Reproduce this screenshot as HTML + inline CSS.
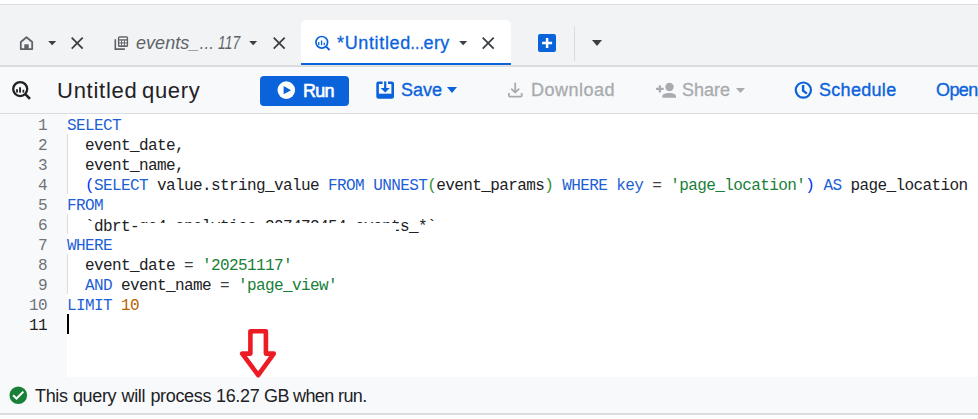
<!DOCTYPE html>
<html><head><meta charset="utf-8">
<style>
*{margin:0;padding:0;box-sizing:border-box}
html,body{width:978px;height:419px;overflow:hidden;background:#fff;position:relative;font-family:"Liberation Sans",sans-serif}
.a{position:absolute}
.t{position:absolute;white-space:nowrap;line-height:1}
#tabbar{left:0;top:4px;width:978px;height:63px;background:#f1f3f4;border-top:1px solid #dadce0;border-bottom:2px solid #dadce0}
#acttab{left:301px;top:20px;width:210px;height:45px;background:#fff;border-radius:5px 5px 0 0}
#actline{left:301px;top:63px;width:210px;height:2px;background:#0b63dc}
#toolbar{left:0;top:67px;width:978px;height:47px;background:#f8f9fa;border-bottom:1px solid #dadce0}
#gutter{left:0;top:114px;width:67px;height:263px;background:#f8f9fa}
#status{left:0;top:377px;width:978px;height:38px;background:#f8f9fa;border-bottom:2px solid #dadce0}
.code{position:absolute;left:67px;font-family:"Liberation Mono",monospace;font-size:16px;letter-spacing:-0.6px;white-space:pre;color:#202124;height:20px;line-height:25px}
.ln{position:absolute;left:0;width:47px;text-align:right;font-family:"Liberation Mono",monospace;font-size:16px;letter-spacing:-0.6px;color:#6f7378;height:20px;line-height:25px}
.kw{color:#1d5fd6}
.str{color:#188038}
.num{color:#b85f00}
.p1{color:#0431fa}
.p2{color:#319331}
.op{color:#3c4043}
.guide{position:absolute;left:67px;width:1px;background:#dadce0}
.btxt{color:#0b63dc;font-size:18px;-webkit-text-stroke:0.35px #0b63dc}
.gtxt{color:#a8abaf;font-size:18px;-webkit-text-stroke:0.3px #a8abaf}
</style></head><body>
<div id="tabbar" class="a"></div>
<div id="acttab" class="a"></div>
<div id="actline" class="a"></div>
<div class="a" style="left:301px;top:65px;width:210px;height:1px;background:#e4e3e0"></div>

<!-- tab 1: home -->
<svg class="a" style="left:19px;top:36px" width="15" height="15" viewBox="0 0 15 15">
<path d="M7.5 1.3 L1.8 6 V13.1 H13.2 V6 Z" fill="none" stroke="#5f6368" stroke-width="1.8" stroke-linejoin="round"/>
<rect x="5.3" y="8.3" width="4.4" height="5.2" fill="#5f6368"/>
</svg>
<svg class="a" style="left:48px;top:41px" width="9" height="5" viewBox="0 0 9 5"><path d="M0.2 0H8.2L4.2 4.2Z" fill="#3c4043"/></svg>
<svg class="a" style="left:70px;top:36px" width="14" height="14" viewBox="0 0 14 14"><path d="M1.7 1.6L12.7 12.6M12.7 1.6L1.7 12.6" stroke="#3c4043" stroke-width="1.8"/></svg>

<!-- tab 2 -->
<svg class="a" style="left:108px;top:30px" width="26" height="26" viewBox="108 30 26 26">
<path d="M115.3 39.3 V49.1 H124.9" fill="none" stroke="#5f6368" stroke-width="1.6"/>
<rect x="117.9" y="36.2" width="10.2" height="10.8" rx="1.6" fill="#5f6368"/>
<rect x="119.3" y="37.7" width="7.4" height="1.5" fill="#fff"/>
<rect x="119.3" y="40.6" width="1.8" height="1.8" fill="#fff"/><rect x="122.1" y="40.6" width="1.8" height="1.8" fill="#fff"/><rect x="124.9" y="40.6" width="1.8" height="1.8" fill="#fff"/>
<rect x="119.3" y="43.5" width="1.8" height="1.8" fill="#fff"/><rect x="122.1" y="43.5" width="1.8" height="1.8" fill="#fff"/><rect x="124.9" y="43.5" width="1.8" height="1.8" fill="#fff"/>
</svg>
<div class="t" style="left:136px;top:34px;font-size:18px;font-style:italic;letter-spacing:0.05px;color:#5f6368">events_</div>
<div class="t" style="left:199px;top:34px;font-size:18px;font-style:italic;color:#5f6368;transform:scaleX(0.85);transform-origin:0 0">…</div>
<div class="t" style="left:218px;top:34px;font-size:18px;font-style:italic;color:#5f6368;transform:scaleX(0.77);transform-origin:0 0">117</div>
<svg class="a" style="left:249px;top:41px" width="9" height="5" viewBox="0 0 9 5"><path d="M0.2 0H8.2L4.2 4.2Z" fill="#3c4043"/></svg>
<svg class="a" style="left:272px;top:36px" width="14" height="14" viewBox="0 0 14 14"><path d="M1.7 1.6L12.7 12.6M12.7 1.6L1.7 12.6" stroke="#3c4043" stroke-width="1.8"/></svg>

<!-- tab 3 -->
<svg class="a" style="left:310px;top:30px" width="26" height="26" viewBox="310 30 26 26">
<circle cx="321.8" cy="42.3" r="5.8" fill="none" stroke="#0b63dc" stroke-width="1.7"/>
<path d="M325.9 46.4 L329.6 50.1" stroke="#0b63dc" stroke-width="2"/>
<rect x="318.1" y="42" width="1.3" height="3.2" fill="#0b63dc"/><rect x="320.9" y="40.5" width="1.3" height="4.7" fill="#0b63dc"/><rect x="323.6" y="42.6" width="1.3" height="2.6" fill="#0b63dc"/>
</svg>
<div class="t" style="left:337px;top:34px;font-size:18px;letter-spacing:0.65px;color:#0b63dc;-webkit-text-stroke:0.3px #0b63dc">*Untitled</div>
<div class="t" style="left:410px;top:34px;font-size:18px;color:#0b63dc;-webkit-text-stroke:0.3px #0b63dc;transform:scaleX(0.8);transform-origin:0 0">…</div>
<div class="t" style="left:423.5px;top:34px;font-size:18px;letter-spacing:0.4px;color:#0b63dc;-webkit-text-stroke:0.3px #0b63dc">ery</div>
<svg class="a" style="left:459px;top:41px" width="9" height="5" viewBox="0 0 9 5"><path d="M0.2 0H8.2L4.2 4.2Z" fill="#3c4043"/></svg>
<svg class="a" style="left:481px;top:36px" width="14" height="14" viewBox="0 0 14 14"><path d="M1.7 1.6L12.7 12.6M12.7 1.6L1.7 12.6" stroke="#3c4043" stroke-width="1.8"/></svg>

<!-- new tab -->
<div class="a" style="left:538px;top:34px;width:18px;height:18px;background:#0b63dc;border-radius:2px"></div>
<svg class="a" style="left:532px;top:28px" width="30" height="30" viewBox="532 28 30 30"><path d="M542.1 43.1 H552.1 M547.1 38.1 V48.1" stroke="#fff" stroke-width="2.5"/></svg>
<div class="a" style="left:574px;top:26px;width:1px;height:35px;background:#dadce0"></div>
<svg class="a" style="left:592px;top:40px" width="10" height="6" viewBox="0 0 10 6"><path d="M0 0H10L5 6Z" fill="#3c4043"/></svg>

<!-- toolbar -->
<div id="toolbar" class="a"></div>
<svg class="a" style="left:6px;top:76px" width="30" height="28" viewBox="6 76 30 28">
<circle cx="20.2" cy="89.1" r="7.0" fill="none" stroke="#202124" stroke-width="2.3"/>
<path d="M25.3 94.2 L30 98.9" stroke="#202124" stroke-width="2.6"/>
<rect x="16.1" y="89.2" width="1.8" height="3.4" fill="#202124"/><rect x="19.1" y="87.3" width="1.9" height="5.3" fill="#202124"/><rect x="22.5" y="89.8" width="1.7" height="2.8" fill="#202124"/>
</svg>
<div class="t" style="left:57px;top:80px;font-size:22px;letter-spacing:0.75px;color:#202124">Untitled</div>
<div class="t" style="left:142px;top:80px;font-size:22px;letter-spacing:0.7px;color:#202124">query</div>

<div class="a" style="left:260px;top:76px;width:89px;height:30px;background:#0b63dc;border-radius:4px"></div>
<svg class="a" style="left:270px;top:76px" width="30" height="30" viewBox="270 76 30 30"><circle cx="286.3" cy="90.1" r="8.8" fill="#fff"/><path d="M283.6 86 L291.1 90.15 L283.6 94.3Z" fill="#0b63dc"/></svg>
<div class="t" style="left:303px;top:82px;font-size:18px;color:#fff;-webkit-text-stroke:0.6px #fff;letter-spacing:-0.8px">Run</div>

<svg class="a" style="left:372px;top:78px" width="26" height="24" viewBox="372 78 26 24">
<rect x="376.3" y="81.4" width="17.7" height="17.3" rx="2.2" fill="#0b63dc"/>
<rect x="378.9" y="84" width="12.5" height="9.7" fill="#f8f9fa"/>
<rect x="382.6" y="81" width="5.4" height="3.2" fill="#f8f9fa"/>
<rect x="384.1" y="81.4" width="2.2" height="7" fill="#0b63dc"/>
<path d="M380.6 88 H389.8 L385.2 92.6Z" fill="#0b63dc"/>
</svg>
<div class="t btxt" style="left:401px;top:81px">Save</div>
<svg class="a" style="left:447px;top:87px" width="10" height="6" viewBox="0 0 10 6"><path d="M0 0H10L5 6Z" fill="#0b63dc"/></svg>

<svg class="a" style="left:502px;top:78px" width="26" height="24" viewBox="502 78 26 24">
<path d="M515.2 82.8 V92.6 M511.2 88.6 L515.2 92.6 L519.2 88.6" fill="none" stroke="#a8abaf" stroke-width="1.8"/>
<path d="M508.9 93.1 V95.7 Q508.9 96.6 509.8 96.6 H520.8 Q521.7 96.6 521.7 95.7 V93.1" fill="none" stroke="#a8abaf" stroke-width="1.8"/>
</svg>
<div class="t gtxt" style="left:531px;top:81px;letter-spacing:0.5px">Download</div>

<svg class="a" style="left:650px;top:78px" width="30" height="24" viewBox="650 78 30 24">
<circle cx="669.5" cy="87" r="4.2" fill="#a8abaf"/>
<path d="M662.3 97.8 V96.3 C662.3 94.3 665 93 669.15 93 C673.3 93 676 94.3 676 96.3 V97.8Z" fill="#a8abaf"/>
<path d="M656 88.9 H663.7 M659.85 85.2 V92.6" stroke="#a8abaf" stroke-width="2.2"/>
</svg>
<div class="t gtxt" style="left:682px;top:81px">Share</div>
<svg class="a" style="left:736px;top:88px" width="9" height="5" viewBox="0 0 9 5"><path d="M0 0H9L4.5 5Z" fill="#a8abaf"/></svg>

<svg class="a" style="left:790px;top:78px" width="26" height="26" viewBox="790 78 26 26">
<circle cx="803.35" cy="90.1" r="7.6" fill="none" stroke="#0b63dc" stroke-width="2.2"/>
<path d="M803.1 85 V90.6 L806.9 93.6" fill="none" stroke="#0b63dc" stroke-width="2.4"/>
</svg>
<div class="t btxt" style="left:819px;top:81px;letter-spacing:0.3px">Schedule</div>
<div class="t btxt" style="left:936px;top:81px;letter-spacing:-0.6px">Open</div>

<!-- editor -->
<div id="gutter" class="a"></div>
<div class="ln" style="top:114px">1</div>
<div class="ln" style="top:134px">2</div>
<div class="ln" style="top:154px">3</div>
<div class="ln" style="top:174px">4</div>
<div class="ln" style="top:194px">5</div>
<div class="ln" style="top:214px">6</div>
<div class="ln" style="top:234px">7</div>
<div class="ln" style="top:254px">8</div>
<div class="ln" style="top:274px">9</div>
<div class="ln" style="top:294px">10</div>
<div class="ln" style="top:314px;color:#202124">11</div>

<div class="guide" style="top:134px;height:60px"></div>
<div class="guide" style="top:214px;height:20px"></div>
<div class="guide" style="top:254px;height:40px"></div>

<div class="code" style="top:114px"><span class="kw">SELECT</span></div>
<div class="code" style="top:134px">  event_date,</div>
<div class="code" style="top:154px">  event_name,</div>
<div class="code" style="top:174px">  <span class="p1">(</span><span class="kw">SELECT</span> value.string_value <span class="kw">FROM</span> <span class="kw">UNNEST</span><span class="p2">(</span>event_params<span class="p2">)</span> <span class="kw">WHERE</span> <span class="kw">key</span> <span class="op">=</span> <span class="str">'page_location'</span><span class="p1">)</span> <span class="kw">AS</span> page_location</div>
<div class="code" style="top:194px"><span class="kw">FROM</span></div>
<div class="code" style="top:215px">  `dbrt-ga4-analytics-307472454.events_*`</div>
<div class="a" style="left:139px;top:223px;width:257px;height:11px;background:#fff"></div>
<div class="code" style="top:234px"><span class="kw">WHERE</span></div>
<div class="code" style="top:254px">  event_date <span class="op">=</span> <span class="str">'20251117'</span></div>
<div class="code" style="top:274px">  <span class="kw">AND</span> event_name <span class="op">=</span> <span class="str">'page_view'</span></div>
<div class="code" style="top:294px"><span class="kw">LIMIT</span> <span class="num">10</span></div>
<div class="a" style="left:67px;top:314px;width:2px;height:20px;background:#000"></div>

<!-- status -->
<div id="status" class="a"></div>
<svg class="a" style="left:4px;top:382px" width="28" height="26" viewBox="4 382 28 26"><circle cx="18.3" cy="395.2" r="8.8" fill="#188038"/><path d="M13.1 395.2 L16.5 398.5 L23.4 391.6" fill="none" stroke="#fff" stroke-width="2"/></svg>
<div class="t" style="left:35px;top:387px;font-size:18px;letter-spacing:-0.34px;word-spacing:0.6px;color:#202124">This query will process</div>
<div class="t" style="left:216px;top:387px;font-size:18px;letter-spacing:-0.34px;color:#202124">16.27</div>
<div class="t" style="left:264px;top:387px;font-size:18px;letter-spacing:-0.6px;color:#202124">GB</div>
<div class="t" style="left:293px;top:387px;font-size:18px;letter-spacing:-0.6px;color:#202124">when</div>
<div class="t" style="left:338px;top:387px;font-size:18px;letter-spacing:-0.6px;color:#202124">run.</div>

<!-- arrow -->
<svg class="a" style="left:236px;top:325px" width="46" height="58" viewBox="236 325 46 58">
<path d="M250.4 331.3 H265.9 V353.6 H273.8 L258.2 375.2 L242.2 353.6 H250.4 Z" fill="none" stroke="#ed1c24" stroke-width="4.6" stroke-linejoin="round"/>
</svg>
</body></html>
